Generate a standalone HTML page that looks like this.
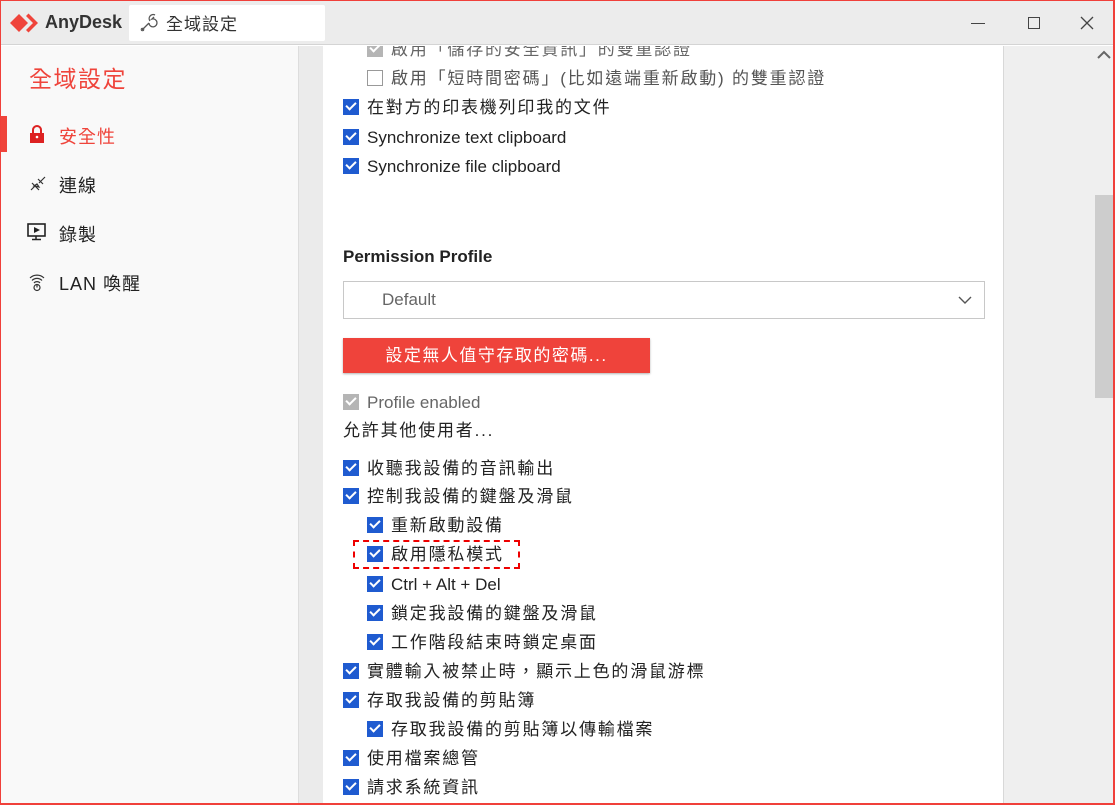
<!DOCTYPE html>
<html><head><meta charset="utf-8"><style>
*{margin:0;padding:0;box-sizing:border-box}
body{width:1115px;height:805px;overflow:hidden;background:#fff;font-family:"Liberation Sans","Noto Sans CJK TC",sans-serif;color:#222;position:relative}
.win{position:absolute;left:0;top:0;width:1115px;height:805px;border:1px solid #f0403a;border-right-width:2px;}
.title{position:absolute;left:1px;top:1px;width:1112px;height:44px;background:#ececec;border-bottom:1px solid #d4d4d4}
.tab{position:absolute;left:128px;top:4px;width:196px;height:36px;background:#fff;border-radius:2px}
.side{position:absolute;left:1px;top:46px;width:297px;height:758px;background:#f9f9f9}
.strip{position:absolute;left:298px;top:46px;width:25px;height:758px;background:#ebebeb;border-left:1px solid #ddd}
.content{position:absolute;left:323px;top:46px;width:680px;height:758px;background:#fff;overflow:hidden}
.gray{position:absolute;left:1003px;top:46px;width:90px;height:758px;background:#efefef;border-left:1px solid #d8d8d8}
.sb{position:absolute;left:1093px;top:46px;width:20px;height:758px;background:#efefef}
.thumb{position:absolute;left:1095px;top:195px;width:18px;height:203px;background:#cdcdcd}
.row{position:absolute;font-size:17px;line-height:22px;white-space:nowrap}
.c{letter-spacing:1.8px}
.cb{display:inline-block;width:16px;height:16px;background:#1f5bd0;vertical-align:-2px;margin-right:8px;position:relative}
.cb::after{content:"";position:absolute;left:3px;top:3px;width:8px;height:4px;border-left:2px solid #fff;border-bottom:2px solid #fff;transform:rotate(-45deg)}
.cb.g{background:#b5b5b5}
.cb.e{background:#fff;border:1px solid #999}
.cb.e::after{display:none}
.nav{position:absolute;font-size:18px;left:58px;letter-spacing:1px}
</style></head><body>
<div class="win"></div>
<div class="title">
 <svg style="position:absolute;left:8px;top:11px" width="30" height="22" viewBox="0 0 30 22"><path d="M1 11 L10 2 L19 11 L10 20Z" fill="#ef443b"/><path d="M17 4 L24 11 L17 18 L19.5 20.5 L29 11 L19.5 1.5Z" fill="#ef443b"/></svg>
 <div style="position:absolute;left:44px;top:11px;font-size:18px;font-weight:bold;color:#333">AnyDesk</div>
 <div class="tab">
  <svg style="position:absolute;left:10px;top:8px" width="20" height="20" viewBox="0 0 20 20"><path d="M3 17 L10 10 M10 10 A4 4 0 1 0 13 6 L15 4 M16 2 A4 4 0 0 0 11 8" stroke="#555" stroke-width="1.3" fill="none"/><circle cx="3.5" cy="16.5" r="1.3" fill="none" stroke="#555"/></svg>
  <div style="position:absolute;left:37px;top:5px;font-size:17px;color:#333;letter-spacing:1px">全域設定</div>
 </div>
 <div style="position:absolute;left:970px;top:22px;width:14px;height:1px;background:#444"></div>
 <div style="position:absolute;left:1027px;top:16px;width:12px;height:12px;border:1.5px solid #444"></div>
 <svg style="position:absolute;left:1079px;top:15px" width="14" height="14"><path d="M1 1L13 13M13 1L1 13" stroke="#444" stroke-width="1.3"/></svg>
</div>
<div class="side">
 <div style="position:absolute;left:28px;top:14px;font-size:23px;color:#ef443b;letter-spacing:1.5px">全域設定</div>
 <div style="position:absolute;left:0;top:70px;width:6px;height:36px;background:#ef443b"></div>
 <svg style="position:absolute;left:28px;top:79px" width="16" height="18" viewBox="0 0 16 18"><path d="M4 8V5a4 4 0 0 1 8 0v3" stroke="#d22" stroke-width="2" fill="none"/><rect x="1" y="8" width="14" height="10" fill="#d22"/><circle cx="8" cy="12" r="1.3" fill="#fff"/></svg>
 <div class="nav" style="top:77px;color:#ef443b">安全性</div>
 <svg style="position:absolute;left:28px;top:129px" width="18" height="18"><path d="M2 15 L8 9 M3 8 L10 15 M10 8 L16 2 M9 4 L14 9 M5 11 L8 9 L10 12Z" stroke="#333" stroke-width="1.2" fill="none"/></svg>
 <div class="nav" style="top:126px">連線</div>
 <svg style="position:absolute;left:26px;top:177px" width="20" height="18"><rect x="1" y="1" width="17" height="12" fill="none" stroke="#222" stroke-width="1.6"/><path d="M7 4 L13 7 L7 10Z" fill="#222"/><path d="M9 13v3M5 16.5h9" stroke="#222" stroke-width="1.5"/></svg>
 <div class="nav" style="top:175px">錄製</div>
 <svg style="position:absolute;left:27px;top:226px" width="18" height="20"><path d="M2 6a10 10 0 0 1 14 0M4 8.5a7 7 0 0 1 10 0M6 11a4 4 0 0 1 6 0" stroke="#333" stroke-width="1.2" fill="none"/><circle cx="9" cy="15.5" r="3" fill="none" stroke="#333" stroke-width="1.2"/><path d="M9 13v2.5" stroke="#333" stroke-width="1.2"/></svg>
 <div class="nav" style="top:224px">LAN 喚醒</div>
</div>
<div class="strip"></div>
<div class="content">
 <div class="row c" style="left:44px;top:-7px;color:#666"><span class="cb g"></span>啟用「儲存的安全資訊」的雙重認證</div>
 <div class="row c" style="left:44px;top:22px;color:#555"><span class="cb e"></span>啟用「短時間密碼」(比如遠端重新啟動) 的雙重認證</div>
 <div class="row c" style="left:20px;top:51px"><span class="cb"></span>在對方的印表機列印我的文件</div>
 <div class="row" style="left:20px;top:81px"><span class="cb"></span>Synchronize text clipboard</div>
 <div class="row" style="left:20px;top:110px"><span class="cb"></span>Synchronize file clipboard</div>
 <div class="row" style="left:20px;top:200px;font-weight:bold">Permission Profile</div>
 <div style="position:absolute;left:20px;top:235px;width:642px;height:38px;border:1px solid #c8c8c8">
  <div style="position:absolute;left:38px;top:8px;font-size:17px;color:#666">Default</div>
  <svg style="position:absolute;right:12px;top:13px" width="14" height="10"><path d="M1 2L7 8L13 2" stroke="#555" stroke-width="1.4" fill="none"/></svg>
 </div>
 <div style="position:absolute;left:20px;top:292px;width:307px;height:35px;background:#ef433b;box-shadow:0 1px 2px rgba(0,0,0,.3);color:#fff;font-size:17px;text-align:center;line-height:35px;letter-spacing:1.5px">設定無人值守存取的密碼...</div>
 <div class="row" style="left:20px;top:346px;color:#666"><span class="cb g"></span>Profile enabled</div>
 <div class="row c" style="left:20px;top:374px">允許其他使用者...</div>
 <div class="row c" style="left:20px;top:412px"><span class="cb"></span>收聽我設備的音訊輸出</div>
 <div class="row c" style="left:20px;top:440px"><span class="cb"></span>控制我設備的鍵盤及滑鼠</div>
 <div class="row c" style="left:44px;top:469px"><span class="cb"></span>重新啟動設備</div>
 <div class="row c" style="left:44px;top:498px"><span class="cb"></span>啟用隱私模式</div>
 <div style="position:absolute;left:30px;top:494px;width:167px;height:29px;border:2.5px dashed #e00"></div>
 <div class="row" style="left:44px;top:528px"><span class="cb"></span>Ctrl + Alt + Del</div>
 <div class="row c" style="left:44px;top:557px"><span class="cb"></span>鎖定我設備的鍵盤及滑鼠</div>
 <div class="row c" style="left:44px;top:586px"><span class="cb"></span>工作階段結束時鎖定桌面</div>
 <div class="row c" style="left:20px;top:615px"><span class="cb"></span>實體輸入被禁止時，顯示上色的滑鼠游標</div>
 <div class="row c" style="left:20px;top:644px"><span class="cb"></span>存取我設備的剪貼簿</div>
 <div class="row c" style="left:44px;top:673px"><span class="cb"></span>存取我設備的剪貼簿以傳輸檔案</div>
 <div class="row c" style="left:20px;top:702px"><span class="cb"></span>使用檔案總管</div>
 <div class="row c" style="left:20px;top:731px"><span class="cb"></span>請求系統資訊</div>
</div>
<div class="gray"></div>
<div class="sb"></div>
<div class="thumb"></div>
<svg style="position:absolute;left:1097px;top:50px" width="14" height="10"><path d="M1 8L7 2L13 8" stroke="#666" stroke-width="2" fill="none"/></svg>
<div style="position:absolute;left:1113px;top:0;width:2px;height:805px;background:#f0403a"></div>
<div style="position:absolute;left:0;top:803px;width:1115px;height:2px;background:#f0403a"></div>
</body></html>
